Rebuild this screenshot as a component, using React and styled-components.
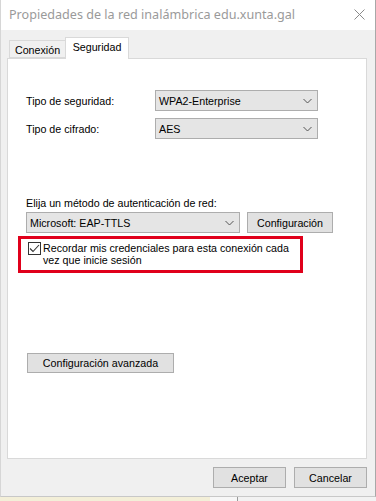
import React from "react";
import styled, { createGlobalStyle } from "styled-components";

const Global = createGlobalStyle`
  html, body { margin: 0; padding: 0; background: #ffffff; }
  body { font-family: "Liberation Sans", Arial, sans-serif; font-size: 10.7px; color: #000; }
  * { box-sizing: border-box; }
`;

const Screen = styled.div`
  width: 376px;
  height: 501px;
  display: flex;
  flex-direction: column;
  overflow: hidden;
  background: #f4f4f4;
`;

const Window = styled.div`
  width: 376px;
  height: 497px;
  display: flex;
  flex-direction: column;
  background: #f0f0f0;
  border-right: 1px solid #a8a8a8;
  border-bottom: 1px solid #c8c8c8;
  border-left: 1px solid #d6d6d6;
`;

const TitleBar = styled.div`
  height: 30px;
  flex: none;
  display: flex;
  align-items: center;
  justify-content: space-between;
  background: #ffffff;
  padding: 0 10px 1px 8px;
`;

const Title = styled.div`
  font-family: "Noto Sans", "Liberation Sans", sans-serif;
  color: #9a9a9a;
  font-size: 12.6px;
`;

const Body = styled.div`
  flex: 1;
  display: flex;
  flex-direction: column;
  padding: 7px 8px 0 6px;
`;

const TabRow = styled.div`
  display: flex;
  align-items: flex-end;
  height: 21px;
  padding-left: 2px;
  position: relative;
  z-index: 1;
`;

const Tab = styled.div`
  width: ${(p) => p.$w}px;
  height: ${(p) => (p.$active ? "22px" : "18px")};
  margin-bottom: ${(p) => (p.$active ? "-1px" : "0")};
  padding-top: ${(p) => (p.$active ? "3px" : "3px")};
  text-align: center;
  background: ${(p) => (p.$active ? "#ffffff" : "#f0f0f0")};
  border: 1px solid #d9d9d9;
  border-bottom: ${(p) => (p.$active ? "none" : "1px solid #d9d9d9")};
  border-right: ${(p) => (p.$active ? "1px solid #d9d9d9" : "none")};
  line-height: 13px;
  white-space: nowrap;
`;

const Panel = styled.div`
  height: 401px;
  flex: none;
  background: #ffffff;
  border: 1px solid #d9d9d9;
  display: flex;
  flex-direction: column;
  padding: 31px 0 0 18px;
`;

const FieldRow = styled.div`
  display: flex;
  align-items: center;
  height: 21px;
  margin-bottom: ${(p) => p.$mb || 0}px;
`;

const Label = styled.div`
  width: 129px;
  flex: none;
`;

const Select = styled.div`
  width: ${(p) => p.$w}px;
  height: 21px;
  flex: none;
  display: flex;
  align-items: center;
  justify-content: space-between;
  background: #e5e5e5;
  border: 1px solid #adadad;
  padding: 0 5px 0 3px;
`;

const Chevron = () => (
  <svg width="9" height="6" viewBox="0 0 9 6">
    <path d="M0.5 1 L4.5 5 L8.5 1" fill="none" stroke="#555" strokeWidth="1" />
  </svg>
);

const SectionLabel = styled.div`
  margin-top: 58px;
  height: 15px;
  line-height: 13px;
`;

const AuthRow = styled.div`
  display: flex;
  gap: 7px;
`;

const Button = styled.div`
  width: ${(p) => p.$w}px;
  height: ${(p) => p.$h || 21}px;
  flex: none;
  display: flex;
  align-items: center;
  justify-content: center;
  background: #e1e1e1;
  border: 1px solid #adadad;
`;

const Highlight = styled.div`
  margin: 3px 0 0 -8px;
  width: 285px;
  height: 37px;
  border: 3px solid #e0001b;
  display: flex;
  gap: 2px;
  padding: 3px 0 0 7px;
`;

const CheckBox = styled.div`
  width: 13px;
  height: 13px;
  flex: none;
  border: 1px solid #333333;
  background: #ffffff;
  display: flex;
  align-items: center;
  justify-content: center;
`;

const CheckText = styled.div`
  line-height: 12px;
  white-space: nowrap;
`;

const AdvancedButton = styled(Button)`
  margin-top: 80px;
  margin-left: 1px;
`;

const Footer = styled.div`
  display: flex;
  justify-content: flex-end;
  gap: 8px;
  margin-top: 8px;
`;

const Strip = styled.div`
  flex: 1;
  display: flex;
`;

const StripPart = styled.div`
  width: ${(p) => p.$w}px;
  background: ${(p) => p.$bg};
  border-right: ${(p) => (p.$line ? "1px solid #999" : "none")};
`;

export default function App() {
  return (
    <>
      <Global />
      <Screen>
        <Window>
          <TitleBar>
            <Title>Propiedades de la red inalámbrica edu.xunta.gal</Title>
            <svg width="11" height="11" viewBox="0 0 11 11">
              <path d="M0.5 0.5 L10.5 10.5 M10.5 0.5 L0.5 10.5" stroke="#8a8a8a" strokeWidth="1" />
            </svg>
          </TitleBar>
          <Body>
            <TabRow>
              <Tab $w={56}>Conexión</Tab>
              <Tab $w={64} $active>Seguridad</Tab>
            </TabRow>
            <Panel>
              <FieldRow $mb={7}>
                <Label>Tipo de seguridad:</Label>
                <Select $w={163}>
                  <span>WPA2-Enterprise</span>
                  <Chevron />
                </Select>
              </FieldRow>
              <FieldRow>
                <Label>Tipo de cifrado:</Label>
                <Select $w={163}>
                  <span>AES</span>
                  <Chevron />
                </Select>
              </FieldRow>
              <SectionLabel>Elija un método de autenticación de red:</SectionLabel>
              <AuthRow>
                <Select $w={214}>
                  <span>Microsoft: EAP-TTLS</span>
                  <Chevron />
                </Select>
                <Button $w={86}>Configuración</Button>
              </AuthRow>
              <Highlight>
                <CheckBox>
                  <svg width="11" height="9" viewBox="0 0 11 9">
                    <path d="M1 4.5 L4 7.5 L10 1" fill="none" stroke="#333" strokeWidth="1.1" />
                  </svg>
                </CheckBox>
                <CheckText>
                  Recordar mis credenciales para esta conexión cada
                  <br />
                  vez que inicie sesión
                </CheckText>
              </Highlight>
              <AdvancedButton $w={147} $h={20}>Configuración avanzada</AdvancedButton>
            </Panel>
            <Footer>
              <Button $w={73} $h={21}>Aceptar</Button>
              <Button $w={73} $h={21}>Cancelar</Button>
            </Footer>
          </Body>
        </Window>
        <Strip>
          <StripPart $w={210} $bg="#f3efd8" />
          <StripPart $w={28} $bg="#f7f7f7" $line />
          <StripPart $w={138} $bg="#f2f2f2" />
        </Strip>
      </Screen>
    </>
  );
}
